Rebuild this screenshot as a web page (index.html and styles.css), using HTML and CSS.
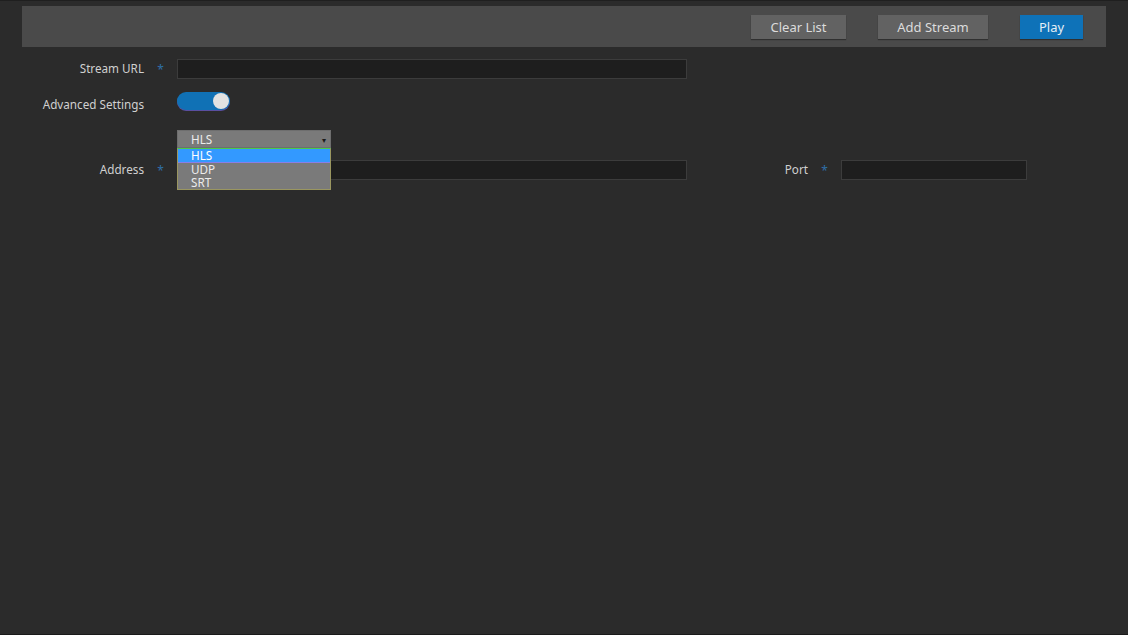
FILE: index.html
```html
<!DOCTYPE html>
<html>
<head>
<meta charset="utf-8">
<link rel="stylesheet" href="styles.css">
</head>
<body>
<div class="page">
  <div class="toolbar">
    <button class="btn btn-gray btn-clear">Clear List</button>
    <button class="btn btn-gray btn-add">Add Stream</button>
    <button class="btn btn-blue btn-play">Play</button>
  </div>
  <div class="form">
    <div class="row row-url">
      <label class="lbl">Stream URL</label>
      <span class="star">*</span>
      <div class="input input-wide"></div>
    </div>
    <div class="row row-adv">
      <label class="lbl lbl-adv">Advanced Settings</label>
      <span class="star"></span>
      <div class="toggle"><span class="knob"></span></div>
    </div>
    <div class="row row-select">
      <span class="lbl"></span>
      <span class="star"></span>
      <div class="select-wrap">
        <div class="select"><span>HLS</span><span class="arrow">▾</span></div>
        <ul class="options">
          <li class="opt opt-active">HLS</li>
          <li class="opt">UDP</li>
          <li class="opt">SRT</li>
        </ul>
      </div>
    </div>
    <div class="row row-addr">
      <label class="lbl">Address</label>
      <span class="star">*</span>
      <div class="input input-wide"></div>
      <label class="lbl lbl-port">Port</label>
      <span class="star">*</span>
      <div class="input input-port"></div>
    </div>
  </div>
</div>
</body>
</html>
```
FILE: styles.css
```css
html, body {
  margin: 0;
  padding: 0;
  height: 100%;
}
body {
  background: #2b2b2b;
  font-family: "Noto Sans", "Open Sans", sans-serif;
  font-size: 11.7px;
  color: #d2d2d2;
  border-top: 1px solid #1f1f1f;
  border-bottom: 1px solid #1a1a1a;
  box-sizing: border-box;
  overflow: hidden;
}
.page {
  padding: 5px 22px 0 22px;
}
.toolbar {
  height: 41px;
  background: #4a4a4a;
  display: flex;
  align-items: center;
  justify-content: flex-end;
  padding-right: 23px;
  box-sizing: border-box;
}
.btn {
  font-family: inherit;
  font-size: 13px;
  color: #dcdcdc;
  border: none;
  height: 24px;
  padding: 0;
  margin-top: 0;
  box-shadow: 0 1px 1px rgba(0,0,0,0.35);
  cursor: pointer;
}
.btn-gray { background: #626262; }
.btn-blue { background: #0e72b8; color: #e4eef6; }
.btn-clear { width: 95px; }
.btn-add { width: 110px; margin-left: 32px; }
.btn-play { width: 63px; margin-left: 32px; }

.form {
  margin-left: -22px;
  padding-top: 12px;
}
.row {
  display: flex;
  align-items: center;
}
.lbl {
  width: 144px;
  text-align: right;
  color: #d0d0d0;
  flex: none;
  position: relative;
  top: -1px;
}
.lbl-adv {
  top: 3px;
}
.star {
  width: 33px;
  flex: none;
  text-align: center;
  color: #2f6fa8;
  font-size: 12px;
  box-sizing: border-box;
}
.input {
  height: 20px;
  background: #1e1e1e;
  border: 1px solid #3c3c3c;
  box-sizing: border-box;
  flex: none;
}
.input-wide { width: 510px; }
.input-port { width: 186px; }
.lbl-port { width: 121px; }

.row-url { height: 20px; }
.row-adv { height: 18px; margin-top: 13px; }
.row-select { height: 18px; margin-top: 20px; position: relative; z-index: 2; }
.row-addr { height: 20px; margin-top: 12px; }

.toggle {
  width: 53px;
  height: 18px;
  border-radius: 9px;
  background: #1071b5;
  box-shadow: 0 1px 0 #5a4fa0;
  position: relative;
  flex: none;
}
.knob {
  position: absolute;
  right: 1px;
  top: 1px;
  width: 16px;
  height: 16px;
  border-radius: 50%;
  background: #e2e2e2;
}

.select-wrap {
  position: relative;
  width: 154px;
  flex: none;
}
.select {
  height: 18px;
  background: #7a7a7a;
  color: #ececec;
  display: flex;
  align-items: center;
  justify-content: space-between;
  padding: 0 4px 0 13px;
  box-sizing: border-box;
  border: 1px solid #6e6e6e;
}
.arrow {
  color: #1a1a1a;
  font-size: 8px;
}
.options {
  position: absolute;
  left: 0;
  top: 18px;
  width: 154px;
  margin: 0;
  padding: 0;
  list-style: none;
  background: #7a7a7a;
  border: 1px solid #9a9660;
  border-top: 1px solid #4cc94c;
  box-sizing: border-box;
}
.opt {
  height: 13px;
  line-height: 13px;
  padding-left: 13px;
  color: #ececec;
}
.opt-active {
  background: #3399ff;
  color: #ffffff;
  border-bottom: 1px solid #8a7ee6;
}
```
